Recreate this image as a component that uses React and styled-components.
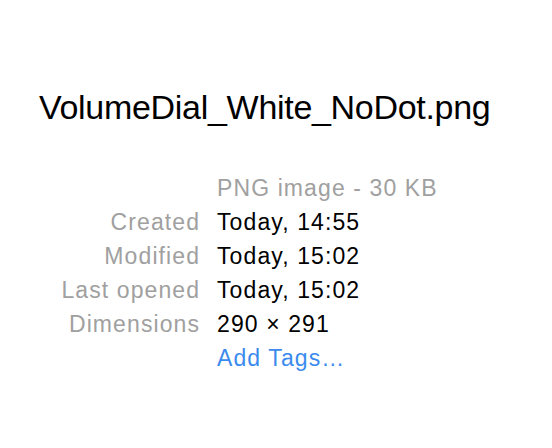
import React from 'react';
import styled, { createGlobalStyle } from 'styled-components';

const GlobalStyle = createGlobalStyle`
  html, body {
    margin: 0;
    background: #ffffff;
  }
  body {
    font-family: "Liberation Sans", Arial, sans-serif;
  }
`;

const Panel = styled.div`
  width: 552px;
  height: 448px;
  box-sizing: border-box;
  padding: 85px 0 0 39px;
`;

const Title = styled.h1`
  margin: 0;
  font-size: 34px;
  font-weight: 400;
  letter-spacing: -0.3px;
  line-height: 44px;
  color: #000;
`;

const InfoGrid = styled.div`
  display: grid;
  grid-template-columns: 160px auto;
  column-gap: 18px;
  margin-top: 42px;
  font-size: 23px;
  letter-spacing: 1.1px;
  line-height: 34px;
`;

const Label = styled.div`
  text-align: right;
  margin-right: -1.1px;
  color: #a0a0a0;
`;

const Value = styled.div`
  color: ${(p) => (p.$tone === 'muted' ? '#a0a0a0' : p.$tone === 'link' ? '#3b8bee' : '#000')};
`;

const rows = [
  ['', 'PNG image - 30 KB', 'muted'],
  ['Created', 'Today, 14:55'],
  ['Modified', 'Today, 15:02'],
  ['Last opened', 'Today, 15:02'],
  ['Dimensions', '290 × 291'],
  ['', 'Add Tags…', 'link'],
];

export default function App() {
  return (
    <>
      <GlobalStyle />
      <Panel>
        <Title>VolumeDial_White_NoDot.png</Title>
        <InfoGrid>
          {rows.map(([label, value, tone], i) => (
            <React.Fragment key={i}>
              <Label>{label}</Label>
              <Value $tone={tone}>{value}</Value>
            </React.Fragment>
          ))}
        </InfoGrid>
      </Panel>
    </>
  );
}
